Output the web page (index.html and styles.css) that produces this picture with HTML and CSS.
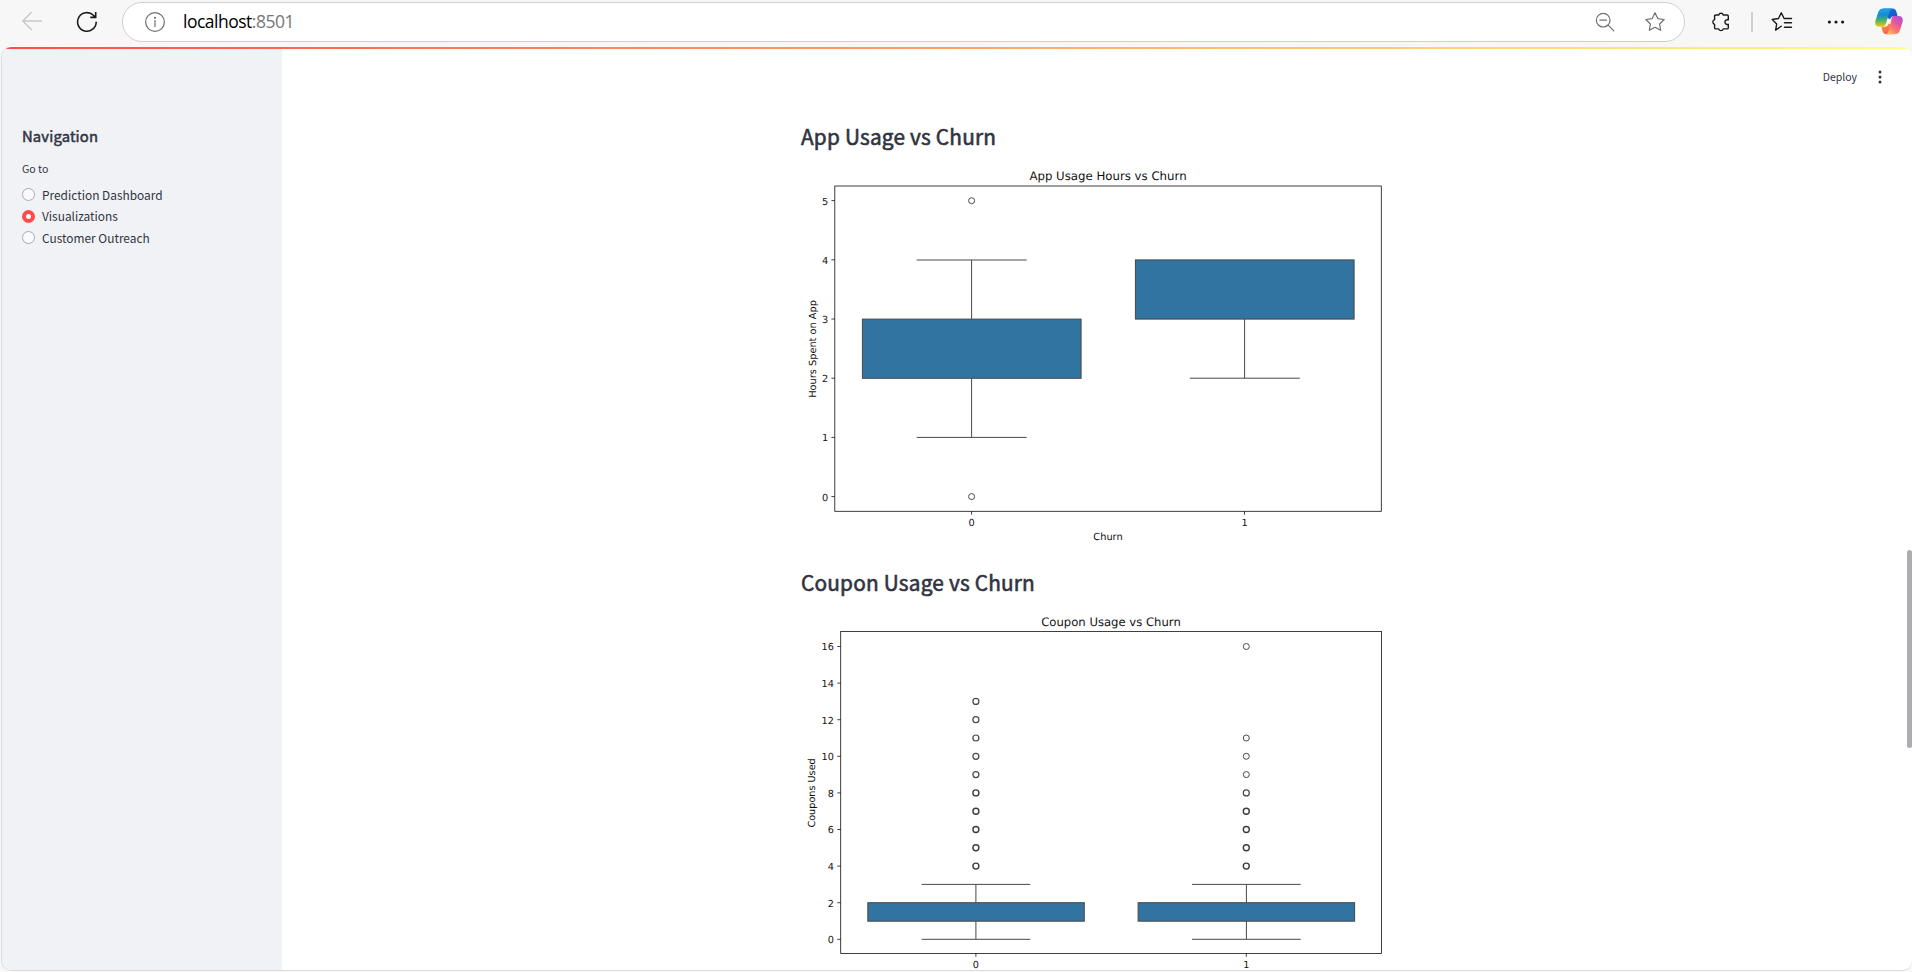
FILE: index.html
```
<!DOCTYPE html>
<html lang="en">
<head>
<meta charset="utf-8">
<title>localhost:8501</title>
<link rel="stylesheet" href="styles.css">
</head>
<body>
<header class="toolbar">
  <svg class="icon back" width="20" height="20" viewBox="0 0 20 20"><path d="M19.7 10H.8M9.3 1.4.8 10l8.5 8.4"/></svg>
  <svg class="icon reload" width="22" height="22" viewBox="0 0 22 22"><path d="M20.2 10.8A9.3 9.3 0 1 1 17.4 4.3l2 1.8M19.7 1v5.4h-5.4"/></svg>
  <div class="address">
    <svg class="icon info" width="22" height="22" viewBox="0 0 22 22"><circle cx="11" cy="11" r="9.4"/><path d="M11 9.6v6"/><circle class="dot" cx="11" cy="6.8" r="1.1"/></svg>
    <span class="url">localhost<span class="port">:8501</span></span>
    <svg class="icon glass" width="20" height="20" viewBox="0 0 20 20"><circle cx="8.2" cy="8.2" r="6.8"/><path d="M13.2 13.2l5.6 5.6M4.900 8.200h6.600"/></svg>
    <svg class="icon star" width="22" height="22" viewBox="0 0 22 22"><path d="M11 1.8 13.8 7.6l6.400.9-4.600 4.500 1.100 6.300L11 16.300l-5.700 3L6.400 13 1.800 8.500l6.400-.9z"/></svg>
  </div>
  <svg class="icon puzzle" width="20" height="22" viewBox="0 0 20 22"><path d="M4.800 4h2.900a2.400 2.400 0 0 1 4.600 0h3.800q1.200 0 1.200 1.200v3.700a2.400 2.400 0 1 0 0 4.400v3.400q0 1.200-1.200 1.200h-3.800a2.400 2.400 0 0 1-4.600 0H4.800q-1.200 0-1.200-1.200v-3.400a2.400 2.400 0 0 1 0-4.600V5.200Q3.600 4 4.800 4z"/></svg>
  <i class="divider"></i>
  <svg class="icon favorites" width="22" height="22" viewBox="0 0 22 22"><path d="M10.200 15.200 4.600 19.100 5.700 13 1.200 8.500l6.300-1 2.800-5.700 2.800 5.700h7.400M13.500 11.800h7M13.500 16.200h7"/></svg>
  <svg class="icon more" width="18" height="6" viewBox="0 0 18 6"><circle cx="2.400" cy="3" r="1.600"/><circle cx="9" cy="3" r="1.600"/><circle cx="15.600" cy="3" r="1.600"/></svg>
  <svg class="copilot" width="28" height="27" viewBox="0 0 28 27">
    <defs>
      <linearGradient id="cool" x1="0" y1="0" x2="0" y2="1"><stop offset="0" stop-color="#1ba4ed"/><stop offset=".35" stop-color="#168ccf"/><stop offset=".65" stop-color="#50b268"/><stop offset="1" stop-color="#f5cc08"/></linearGradient>
      <linearGradient id="warm" x1="1" y1="0" x2=".3" y2="1"><stop offset="0" stop-color="#9b50ed"/><stop offset=".45" stop-color="#e8559c"/><stop offset=".75" stop-color="#fb7a6a"/><stop offset="1" stop-color="#ffb367"/></linearGradient>
      <linearGradient id="blue" x1="0" y1="0" x2="1" y2="1"><stop offset="0" stop-color="#1279d8"/><stop offset="1" stop-color="#1c4dc7"/></linearGradient>
      <linearGradient id="ember" x1="0" y1="0" x2="1" y2="1"><stop offset="0" stop-color="#ff9a3d"/><stop offset="1" stop-color="#ee4a58"/></linearGradient>
    </defs>
    <path fill="url(#blue)" d="M8 .5h9.200c2.800 0 3.800 1.600 4.500 4.200L22.500 8h-3.300c-2.400 0-3.400 1.300-4 3.300L8 8z"/>
    <path fill="url(#ember)" d="M6.500 18.800h3.300c2.200 0 3.200-1.200 3.800-3.200L20 19l-3 7.200h-5.500c-2.600 0-3.500-1.400-4.200-3.700z"/>
    <path fill="url(#cool)" d="M8.600.5h8.200c-1.600.7-2.200 2.700-2.900 5.200L11.100 15c-.8 2.800-1.800 3.800-4.300 3.800H4.200c-3.400 0-4.600-2.700-3.700-6.200L3 4.900C3.900 1.900 5.200.5 8.600.5z"/>
    <path fill="url(#warm)" d="M18.600 8h5.200c3.400 0 4.600 2.700 3.700 6.200L25 21.900c-.9 3-2.200 4.300-5.600 4.300h-8.200c1.600-.7 2.200-2.700 2.900-5.200l2.300-9.300C17 9 17.300 8 18.600 8z"/>
  </svg>
</header>

<div class="window">
  <div class="decoration"></div>
  <aside class="sidebar">
    <h3 class="nav-title">Navigation</h3>
    <p class="nav-label">Go to</p>
    <ul class="options">
      <li class="option"><i class="radio"></i><span>Prediction Dashboard</span></li>
      <li class="option"><i class="radio checked"></i><span>Visualizations</span></li>
      <li class="option"><i class="radio"></i><span>Customer Outreach</span></li>
    </ul>
  </aside>
  <main class="content">
    <div class="app-bar"><span class="deploy">Deploy</span><svg class="kebab" width="4" height="14" viewBox="0 0 4 14"><circle cx="2" cy="2.100" r="1.500"/><circle cx="2" cy="7" r="1.500"/><circle cx="2" cy="11.900" r="1.500"/></svg></div>
    <section class="block">
      <h2 class="title">App Usage vs Churn</h2>
      <svg class="chart chart-app" width="584" height="390" viewBox="801 165 584 390">
        <g class="axis">
          <rect x="834.800" y="186" width="546.500" height="325.300"/>
          <path d="M831.400 200.600h3.400M831.400 259.800h3.400M831.400 319h3.400M831.400 378.200h3.400M831.400 437.400h3.400M831.400 496.600h3.400M971.600 511.300v3.400M1244.500 511.300v3.400"/>
        </g>
        <g class="box">
          <rect x="862.400" y="319.100" width="218.700" height="59.200"/>
          <path d="M971.600 319V259.900M971.600 378.200V437.400M916.700 260h110M916.700 437.400h110"/>
          <circle cx="971.600" cy="200.700" r="3"/><circle cx="971.600" cy="496.600" r="3"/>
          <rect x="1135.400" y="259.900" width="218.700" height="59.200"/>
          <path d="M1244.600 319V378.200M1189.800 378.200h110"/>
        </g>
        <text class="caption" x="1108" y="180">App Usage Hours vs Churn</text>
        <g class="ticks"><text x="828.200" y="204.500">5</text><text x="828.200" y="263.700">4</text><text x="828.200" y="322.900">3</text><text x="828.200" y="382.100">2</text><text x="828.200" y="441.300">1</text><text x="828.200" y="500.500">0</text></g>
        <g class="labels"><text x="971.600" y="526.200">0</text><text x="1244.500" y="526.200">1</text><text x="1108" y="539.900">Churn</text><text transform="translate(815.600 348.900) rotate(-90)">Hours Spent on App</text></g>
      </svg>
    </section>
    <section class="block">
      <h2 class="title">Coupon Usage vs Churn</h2>
      <svg class="chart chart-coupon" width="584" height="359" viewBox="801 611 584 359">
        <g class="axis">
          <rect x="840.700" y="631.600" width="540.700" height="321.800"/>
          <path d="M837.300 646.500h3.400M837.300 683.100h3.400M837.300 719.700h3.400M837.300 756.300h3.400M837.300 792.900h3.400M837.300 829.500h3.400M837.300 866.100h3.400M837.300 902.700h3.400M837.300 939.300h3.400M975.900 953.400v3.400M1246.300 953.400v3.400"/>
        </g>
        <g class="box">
          <rect x="867.800" y="902.700" width="216.500" height="18.500"/>
          <path d="M975.900 902.700V884.400M975.900 921V939.300M921.600 884.400h108.700M921.600 939.300h108.700"/>
          <g class="medium"><circle cx="975.900" cy="701.400" r="3"/><circle cx="975.900" cy="719.700" r="3"/><circle cx="975.900" cy="738" r="3"/><circle cx="975.900" cy="756.300" r="3"/><circle cx="975.900" cy="774.600" r="3"/></g>
          <g class="dense"><circle cx="975.900" cy="792.900" r="3"/><circle cx="975.900" cy="811.200" r="3"/><circle cx="975.900" cy="829.500" r="3"/><circle cx="975.900" cy="847.800" r="3"/><circle cx="975.900" cy="866.100" r="3"/></g>
          <rect x="1138.100" y="902.700" width="216.500" height="18.500"/>
          <path d="M1246.400 902.700V884.400M1246.400 921V939.300M1192 884.400h108.700M1192 939.300h108.700"/>
          <circle cx="1246.300" cy="646.500" r="3"/><circle cx="1246.300" cy="738" r="3"/><circle cx="1246.300" cy="756.300" r="3"/><circle cx="1246.300" cy="774.600" r="3"/>
          <g class="medium"><circle cx="1246.300" cy="792.900" r="3"/></g>
          <g class="dense"><circle cx="1246.300" cy="811.200" r="3"/><circle cx="1246.300" cy="829.500" r="3"/><circle cx="1246.300" cy="847.800" r="3"/><circle cx="1246.300" cy="866.100" r="3"/></g>
        </g>
        <text class="caption" x="1111" y="626">Coupon Usage vs Churn</text>
        <g class="ticks"><text x="833.900" y="650.400">16</text><text x="833.900" y="687">14</text><text x="833.900" y="723.600">12</text><text x="833.900" y="760.200">10</text><text x="833.900" y="796.800">8</text><text x="833.900" y="833.400">6</text><text x="833.900" y="870">4</text><text x="833.900" y="906.600">2</text><text x="833.900" y="943.200">0</text></g>
        <g class="labels"><text x="975.900" y="968.400">0</text><text x="1246.300" y="968.400">1</text><text transform="translate(815.400 792.900) rotate(-90)">Coupons Used</text></g>
      </svg>
    </section>
  </main>
  <div class="scroll-thumb"></div>
</div>
</body>
</html>
```
FILE: styles.css
```
* { box-sizing: border-box; }
body {
  margin: 0;
  height: 972px;
  overflow: hidden;
  display: flex;
  flex-direction: column;
  background: #f7f7f7;
  color: #31333f;
  font-family: "Noto Sans CJK JP", "Noto Sans", sans-serif;
}
svg { flex: none; display: block; }

.toolbar { height: 47px; flex: none; display: flex; padding: 2px 0 0 22px; }
.icon { fill: none; stroke: #1b1b1b; stroke-width: 1.4; stroke-linecap: round; stroke-linejoin: round; }
.back { margin-top: 9px; stroke: #c9c9c9; }
.reload { margin: 9px 0 0 34px; stroke-width: 1.6; stroke-linecap: butt; stroke-linejoin: miter; }
.address {
  width: 1563px;
  height: 40px;
  flex: none;
  margin-left: 24px;
  padding-left: 21px;
  display: flex;
  border: 1px solid #cfcfcf;
  border-radius: 20px;
  background: #fff;
}
.address .icon { stroke: #707070; stroke-width: 1.2; }
.info { margin-top: 8px; }
.info .dot { fill: #707070; stroke: none; }
.url {
  width: 1429px;
  flex: none;
  padding-left: 17px;
  font: 17.5px/37px "Open Sans", sans-serif;
  letter-spacing: -.5px;
  color: #000;
}
.port { color: #767676; }
.glass { margin-top: 9px; }
.star { margin: 8px 0 0 29px; }
.puzzle { margin: 9px 0 0 26px; }
.divider { width: 2px; height: 20px; flex: none; margin: 10px 0 0 20px; background: #cecece; }
.favorites { margin: 9px 0 0 18px; }
.more { margin: 17px 0 0 34px; fill: #1b1b1b; stroke: none; }
.copilot { margin: 6px 0 0 30px; }

.window {
  position: relative;
  height: 924px;
  flex: none;
  margin-left: 1px;
  display: flex;
  overflow: hidden;
  border: 1px solid #dcdcdc;
  border-top: 0;
  border-right: 0;
  border-radius: 10px;
  background: #fff;
}
.decoration {
  position: absolute;
  inset: 0 0 auto;
  height: 2px;
  background: linear-gradient(90deg, #ff4b4b, #fffd80);
}
.sidebar { width: 280px; flex: none; padding: 77px 20px 0; background: #f0f2f6; }
.nav-title {
  margin: 0;
  font-size: 14.8px;
  line-height: 24px;
  font-weight: 400;
  letter-spacing: .15px;
  -webkit-text-stroke: .5px #31333f;
}
.nav-label { margin: 11px 0 0; font-size: 10.6px; line-height: 20px; }
.options { margin: 5px 0 0; padding: 0; list-style: none; font-size: 11.9px; }
.option { height: 21.5px; display: flex; align-items: center; gap: 7px; white-space: nowrap; }
.option span { margin-top: -1px; }
.radio { width: 13px; height: 13px; border: 1px solid #a9abb3; border-radius: 50%; background: #fafafc; }
.radio.checked { border: 4px solid #ff4b4b; background: #fff; }

.content { flex: 1; }
.app-bar { height: 62px; padding: 15px 30px 0 0; display: flex; justify-content: flex-end; align-items: flex-start; gap: 21px; }
.deploy { font-size: 10.5px; line-height: 29px; }
.kebab { margin-top: 8px; fill: #31333f; }
.block { width: 584px; margin-left: 519px; }
.title {
  margin: 0;
  height: 56px;
  padding-top: 9px;
  font-size: 20.8px;
  line-height: 36px;
  font-weight: 400;
  letter-spacing: .2px;
  white-space: nowrap;
  -webkit-text-stroke: .6px #31333f;
}

.chart { font-family: "DejaVu Sans", sans-serif; fill: #111; text-rendering: geometricPrecision; }
.chart-app { font-size: 9.79px; }
.chart-coupon { font-size: 9.69px; }
.chart-app .caption { font-size: 11.75px; }
.chart-coupon .caption { font-size: 11.63px; }
.caption, .labels { text-anchor: middle; }
.ticks { text-anchor: end; }
.axis { fill: none; stroke: #111; stroke-width: .8; }
.box { fill: none; stroke: #484848; stroke-width: 1; }
.box rect { fill: #3274a1; }
.medium { stroke-width: 1.2; }
.dense { stroke: #3c3c3c; stroke-width: 1.4; }

.scroll-thumb {
  position: absolute;
  top: 503px;
  right: 0;
  width: 5px;
  height: 198px;
  border-radius: 3px;
  background: #adadb1;
}
```
